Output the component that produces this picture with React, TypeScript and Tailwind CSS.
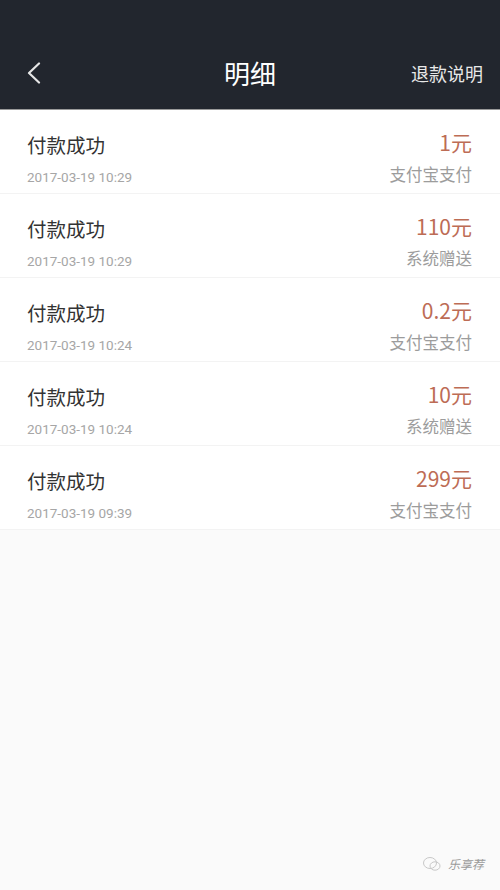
import React from "react";

const rows = [
  { time: "2017-03-19 10:29", amount: "1元", method: "支付宝支付" },
  { time: "2017-03-19 10:29", amount: "110元", method: "系统赠送" },
  { time: "2017-03-19 10:24", amount: "0.2元", method: "支付宝支付" },
  { time: "2017-03-19 10:24", amount: "10元", method: "系统赠送" },
  { time: "2017-03-19 09:39", amount: "299元", method: "支付宝支付" },
];

const font = { fontFamily: '"Noto Sans CJK SC", Roboto, "Noto Sans", sans-serif' };

export default function App() {
  return (
    <div className="w-[500px] h-[890px] bg-[#fafafa] flex flex-col overflow-hidden" style={font}>
      <div className="h-[110px] bg-[#22262e] flex items-end pb-[16px] border-b border-[#9a9a9a]">
        <div className="relative w-full h-[40px] flex items-center justify-center">
          <svg className="absolute left-[26px] top-[9px]" width="16" height="22" viewBox="0 0 16 22">
            <path d="M13 1.5 L3 11 L13 20.5" fill="none" stroke="#e6e6e6" strokeWidth="2.2" strokeLinecap="round" strokeLinejoin="round" />
          </svg>
          <span className="text-[26px] text-white leading-none">明细</span>
          <span className="absolute right-[17px] top-[11px] text-[18px] text-[#e8e8e8] leading-none">退款说明</span>
        </div>
      </div>
      <div className="flex flex-col">
        {rows.map((r, i) => (
          <div key={i} className="h-[84px] bg-white border-b border-[#f3f3f3] flex items-start justify-between pl-[27px] pr-[28px]">
            <div className="flex flex-col pt-[25px] gap-[16px]">
              <span className="text-[19.5px] leading-none text-[#333333]">付款成功</span>
              <span className="text-[13.5px] leading-none text-[#a6a6a6]" style={{ fontFamily: 'Roboto, "Noto Sans", sans-serif' }}>{r.time}</span>
            </div>
            <div className="flex flex-col items-end pt-[22px] gap-[13px]">
              <span className="text-[21px] leading-none text-[#bd6c55]">{r.amount}</span>
              <span className="text-[16.5px] leading-none text-[#9c9c9c]">{r.method}</span>
            </div>
          </div>
        ))}
      </div>
      <div className="flex-1 flex items-end justify-end pr-[16px] pb-[18px]">
        <div className="flex items-center gap-[6px]">
          <svg width="20" height="16" viewBox="0 0 20 16">
            <ellipse cx="8" cy="7" rx="6.5" ry="5.5" fill="none" stroke="#c8c8c8" strokeWidth="1" />
            <ellipse cx="13" cy="10" rx="5" ry="4.2" fill="none" stroke="#c8c8c8" strokeWidth="1" />
          </svg>
          <span className="text-[12px] text-[#9a9a9a] leading-none italic">乐享荐</span>
        </div>
      </div>
    </div>
  );
}
